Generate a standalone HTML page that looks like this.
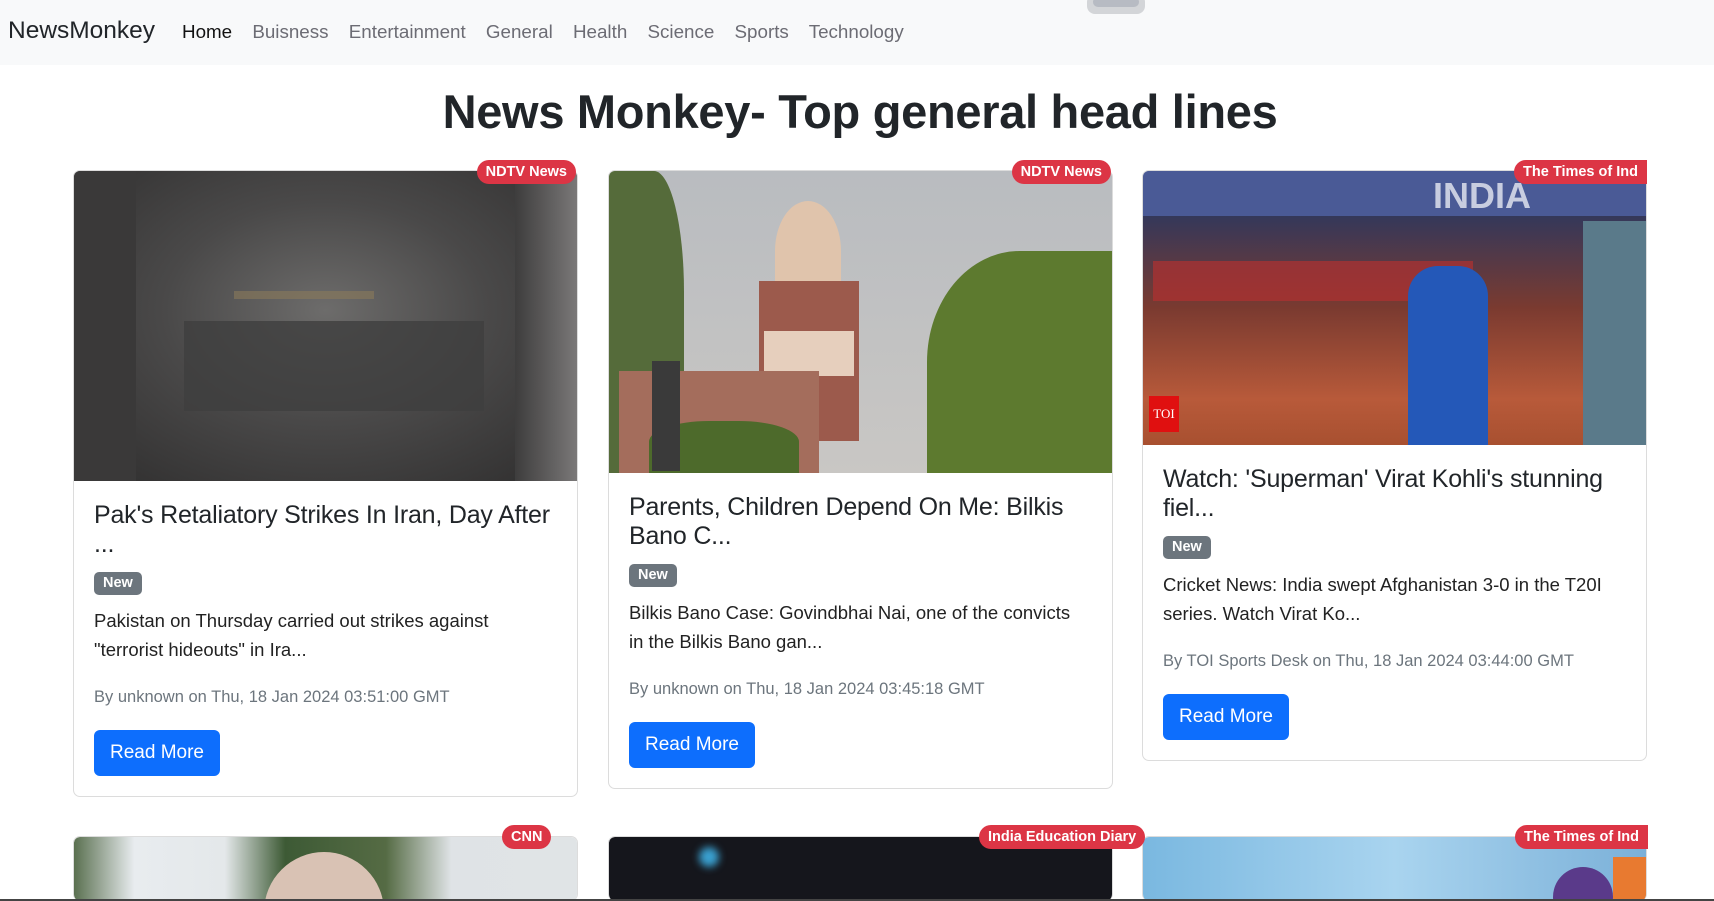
<!DOCTYPE html>
<html><head><meta charset="utf-8"><style>
*{box-sizing:border-box;margin:0;padding:0}
html,body{width:1714px;height:901px;overflow:hidden}
body{background:#fff;font-family:"Liberation Sans",sans-serif;color:#212529;position:relative}
.nav{position:absolute;left:0;top:0;width:1714px;height:65px;background:#f8f9fa}
.brand{position:absolute;left:8px;top:17px;font-size:24.5px;color:#212529}
.links{position:absolute;left:182px;top:21px;font-size:18.8px;color:#6c6c74;white-space:nowrap}
.links span{margin-right:15px}
.links span:first-child{color:#111}
.gad{position:absolute;left:1087px;top:-6px;width:58px;height:20px;background:#d3d5d8;border-radius:8px}
.gad:after{content:"";position:absolute;left:6px;top:3px;width:46px;height:10px;background:#b7bbc3;border-radius:5px}
h1{position:absolute;left:0;width:1720px;top:84px;text-align:center;font-size:47px;font-weight:bold;color:#212529;letter-spacing:-0.3px}
.card{position:absolute;width:505px;border:1px solid #dcdcdc;border-radius:7px;background:#fff}
.img{width:100%;border-radius:6px 6px 0 0;overflow:hidden;position:relative}
.body{padding:20px 20px 20px 20px}
.t{font-size:25px;line-height:29px;font-weight:normal;white-space:nowrap;letter-spacing:-0.2px}
.nb{display:inline-block;margin-top:13px;background:#6c757d;color:#fff;font-weight:bold;font-size:14.5px;height:23px;line-height:23px;padding:0 9px;border-radius:5px}
.p{margin-top:11px;font-size:18.5px;line-height:29px;white-space:nowrap;color:#222}
.s{margin-top:21px;font-size:16.5px;line-height:24px;color:#6c757d;white-space:nowrap}
.btn{margin-top:21px;display:inline-block;background:#0d6efd;color:#fff;font-size:19px;height:46px;line-height:46px;padding:0 16px;border-radius:6px}
.bd{position:absolute;top:-11px;background:#dc3545;color:#fff;font-weight:bold;font-size:14.5px;height:24px;line-height:24px;padding:0 9px;border-radius:12px;white-space:nowrap;z-index:2}
</style></head><body>
<div class="nav"><div class="brand">NewsMonkey</div>
<div class="links"><span>Home</span> <span>Buisness</span> <span>Entertainment</span> <span>General</span> <span>Health</span> <span>Science</span> <span>Sports</span> <span>Technology</span></div>
<div class="gad"></div></div>
<h1>News Monkey- Top general head lines</h1>

<div class="card" style="left:73px;top:170px">
<div class="bd" style="right:1px">NDTV News</div>
<div class="img" style="height:310px;background:radial-gradient(ellipse at 50% 45%,#6d6c6b 0%,#4a4949 45%,#2e2d2d 100%)">
<div style="position:absolute;left:0;top:0;width:62px;height:310px;background:#3a3939"></div>
<div style="position:absolute;right:0;top:0;width:62px;height:310px;background:linear-gradient(90deg,#3e3d3d,#7a7878)"></div>
<div style="position:absolute;left:110px;top:150px;width:300px;height:90px;background:#3f3e3e;opacity:.8"></div>
<div style="position:absolute;left:160px;top:120px;width:140px;height:8px;background:#8a7a5a;opacity:.6"></div>
</div>
<div class="body"><div class="t">Pak's Retaliatory Strikes In Iran, Day After<br>...</div>
<div class="nb">New</div>
<div class="p">Pakistan on Thursday carried out strikes against<br>"terrorist hideouts" in Ira...</div>
<div class="s">By unknown on Thu, 18 Jan 2024 03:51:00 GMT</div>
<div class="btn">Read More</div></div></div>

<div class="card" style="left:608px;top:170px">
<div class="bd" style="right:1px">NDTV News</div>
<div class="img" style="height:302px;background:linear-gradient(#b9bcc0,#c9c7c4)">
<div style="position:absolute;left:0;top:0;width:75px;height:302px;background:#556b3a;border-radius:0 40% 30% 0"></div>
<div style="position:absolute;left:166px;top:30px;width:66px;height:100px;background:#e0c4ac;border-radius:50% 50% 0 0"></div>
<div style="position:absolute;left:150px;top:110px;width:100px;height:160px;background:#9c5a4c"></div>
<div style="position:absolute;left:155px;top:160px;width:90px;height:45px;background:#e6cfbd"></div>
<div style="position:absolute;left:10px;top:200px;width:200px;height:102px;background:#a46d5c"></div>
<div style="position:absolute;right:0;top:80px;width:185px;height:222px;background:#5d7a2f;border-radius:50% 0 0 0"></div>
<div style="position:absolute;left:40px;top:250px;width:150px;height:52px;background:#4d6a2b;border-radius:40% 40% 0 0"></div>
<div style="position:absolute;left:43px;top:190px;width:28px;height:110px;background:#3a3a3a"></div>
</div>
<div class="body"><div class="t">Parents, Children Depend On Me: Bilkis<br>Bano C...</div>
<div class="nb">New</div>
<div class="p">Bilkis Bano Case: Govindbhai Nai, one of the convicts<br>in the Bilkis Bano gan...</div>
<div class="s">By unknown on Thu, 18 Jan 2024 03:45:18 GMT</div>
<div class="btn">Read More</div></div></div>

<div class="card" style="left:1142px;top:170px">
<div class="bd" style="right:-1px;border-radius:12px 0 0 12px">The Times of Ind</div>
<div class="img" style="height:274px;background:#4a5a8a">
<div style="position:absolute;left:0;top:0;width:505px;height:45px;background:#4a5a96"></div>
<div style="position:absolute;left:290px;top:4px;font-size:36px;font-weight:bold;color:#c8cde0">INDIA</div>
<div style="position:absolute;left:0;top:45px;width:505px;height:229px;background:linear-gradient(#34385a,#7a3a30 40%,#b85a3a 80%,#a85030)"></div>
<div style="position:absolute;left:10px;top:90px;width:320px;height:40px;background:#b03030;opacity:.7"></div>
<div style="position:absolute;left:265px;top:95px;width:80px;height:179px;background:#2458b8;border-radius:30px 30px 0 0"></div>
<div style="position:absolute;left:440px;top:50px;width:65px;height:224px;background:#5a7a8a"></div>
<div style="position:absolute;left:6px;top:225px;width:30px;height:36px;background:#e01010;color:#fff;font-size:13px;font-family:'Liberation Serif',serif;line-height:36px;text-align:center">TOI</div>
</div>
<div class="body"><div class="t">Watch: 'Superman' Virat Kohli's stunning<br>fiel...</div>
<div class="nb">New</div>
<div class="p">Cricket News: India swept Afghanistan 3-0 in the T20I<br>series. Watch Virat Ko...</div>
<div class="s">By TOI Sports Desk on Thu, 18 Jan 2024 03:44:00 GMT</div>
<div class="btn">Read More</div></div></div>

<div class="card" style="left:73px;top:836px;height:65px;border-bottom:none;overflow:hidden">
<div class="img" style="height:64px;background:linear-gradient(90deg,#5a7050 0%,#e8ecef 12%,#e4e8ea 30%,#3d5a35 42%,#556b44 62%,#dfe3e6 75%,#e0e4e6 100%)">
<div style="position:absolute;left:190px;top:15px;width:120px;height:120px;background:#d9c2b4;border-radius:50%"></div></div></div>
<div class="bd" style="left:502px;top:825px">CNN</div>
<div class="card" style="left:608px;top:836px;height:65px;border-bottom:none;overflow:hidden">
<div class="img" style="height:64px;background:#15161c"><div style="position:absolute;left:90px;top:10px;width:20px;height:20px;background:#3aa0d0;border-radius:50%;filter:blur(4px)"></div></div></div>
<div class="bd" style="left:979px;top:825px">India Education Diary</div>
<div class="card" style="left:1142px;top:836px;height:65px;border-bottom:none;overflow:hidden">
<div class="img" style="height:64px;background:linear-gradient(90deg,#7ab8e0,#a9d4ef 50%,#7bb0d8)"><div style="position:absolute;left:410px;top:30px;width:60px;height:60px;background:#5a3a8a;border-radius:50%"></div><div style="position:absolute;left:470px;top:20px;width:40px;height:70px;background:#e87a30"></div></div></div>
<div class="bd" style="left:1515px;top:825px;border-radius:12px 0 0 12px;width:133px;overflow:hidden">The Times of Ind</div>
<div style="position:absolute;left:0;top:899px;width:1714px;height:2px;background:#444;z-index:5"></div>
</body></html>
